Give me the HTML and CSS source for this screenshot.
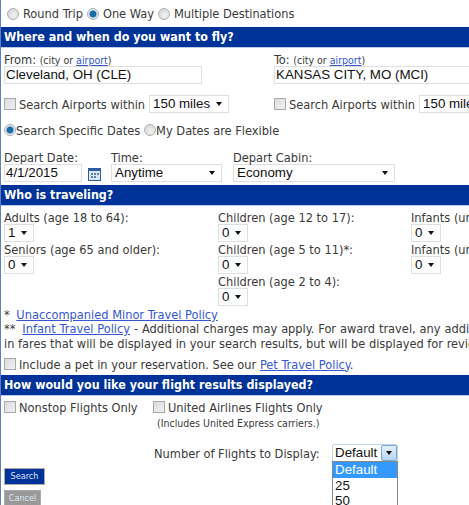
FILE: index.html
```html
<!DOCTYPE html>
<html lang="en">
    <head>
        <meta charset="UTF-8">
        <title>Flight Search</title>
        <link rel="stylesheet" href="styles.css">
    </head>
    <body>
        <form class="page">
            <div class="trip-type">
                <label><span class="radio"></span>Round Trip</label>
                <label><span class="radio checked"></span>One Way</label>
                <label><span class="radio"></span>Multiple Destinations</label>
            </div>

            <h2 class="section-bar">Where and when do you want to fly?</h2>
            <div class="route">
                <div class="route-col">
                    <div class="field-label">From: <small>(city or <a href="#">airport</a>)</small></div>
                    <div class="input wide">Cleveland, OH (CLE)</div>
                    <div class="within">
                        <span class="check"></span>
                        <span>Search Airports within</span>
                        <div class="select miles">150 miles<i class="arrow"></i></div>
                    </div>
                </div>
                <div class="route-col">
                    <div class="field-label">To: <small>(city or <a href="#">airport</a>)</small></div>
                    <div class="input wide">KANSAS CITY, MO (MCI)</div>
                    <div class="within">
                        <span class="check"></span>
                        <span>Search Airports within</span>
                        <div class="select miles">150 miles<i class="arrow"></i></div>
                    </div>
                </div>
            </div>
            <div class="date-type">
                <span class="radio checked"></span><span>Search Specific Dates</span>
                <span class="radio second"></span><span>My Dates are Flexible</span>
            </div>
            <div class="depart">
                <div class="depart-date">
                    <div class="field-label">Depart Date:</div>
                    <div class="date-row">
                        <div class="input date">4/1/2015</div>
                        <svg class="cal" width="13" height="13" viewBox="0 0 13 13">
                            <rect x="0.5" y="0.5" width="12" height="12" fill="#dbe6f4" stroke="#2f5d9e"/>
                            <rect x="1" y="1" width="11" height="2" fill="#2f5d9e"/>
                            <path d="M3 5h2v2H3zM6 5h2v2H6zM9 5h2v2H9zM3 8h2v2H3zM6 8h2v2H6z" fill="#5a83bb"/>
                        </svg>
                    </div>
                </div>
                <div class="depart-time">
                    <div class="field-label">Time:</div>
                    <div class="select time">Anytime<i class="arrow"></i></div>
                </div>
                <div class="depart-cabin">
                    <div class="field-label">Depart Cabin:</div>
                    <div class="select cabin">Economy<i class="arrow"></i></div>
                </div>
            </div>

            <h2 class="section-bar">Who is traveling?</h2>
            <div class="travelers">
                <div class="pax-col col-1">
                    <div class="field-label">Adults (age 18 to 64):</div>
                    <div class="select num">1<i class="arrow"></i></div>
                    <div class="field-label">Seniors (age 65 and older):</div>
                    <div class="select num">0<i class="arrow"></i></div>
                </div>
                <div class="pax-col col-2">
                    <div class="field-label">Children (age 12 to 17):</div>
                    <div class="select num">0<i class="arrow"></i></div>
                    <div class="field-label">Children (age 5 to 11)*:</div>
                    <div class="select num">0<i class="arrow"></i></div>
                    <div class="field-label">Children (age 2 to 4):</div>
                    <div class="select num">0<i class="arrow"></i></div>
                </div>
                <div class="pax-col col-3">
                    <div class="field-label">Infants (under 2, in seat):</div>
                    <div class="select num">0<i class="arrow"></i></div>
                    <div class="field-label">Infants (under 2, on lap):</div>
                    <div class="select num">0<i class="arrow"></i></div>
                </div>
            </div>
            <div class="policies">
                <p><span class="stars">*</span> <a href="#">Unaccompanied Minor Travel Policy</a></p>
                <p class="award"><span class="stars">**</span> <a href="#">Infant Travel Policy</a> - Additional charges may apply. For award travel, any additional fees</p>
                <p>in fares that will be displayed in your search results, but will be displayed for review before purchase.</p>
            </div>
            <div class="pet">
                <span class="check"></span>
                <span>Include a pet in your reservation. See our <a href="#">Pet Travel Policy</a>.</span>
            </div>

            <h2 class="section-bar">How would you like your flight results displayed?</h2>
            <div class="results">
                <div class="result-opts">
                    <div class="opt nonstop"><span class="check"></span><span>Nonstop Flights Only</span></div>
                    <div>
                        <div class="opt"><span class="check"></span><span>United Airlines Flights Only</span></div>
                        <div class="note">(Includes United Express carriers.)</div>
                    </div>
                </div>
                <div class="count-row">
                    <span class="count-label">Number of Flights to Display:</span>
                    <div class="count">
                        <div class="count-box">Default<span class="count-btn"><i class="arrow"></i></span></div>
                        <ul class="count-menu">
                            <li class="active">Default</li>
                            <li>25</li>
                            <li>50</li>
                        </ul>
                    </div>
                </div>
                <div class="btn blue">Search</div>
                <div class="btn grey">Cancel</div>
            </div>
        </form>
    </body>
</html>
```

FILE: styles.css
```css
html, body {
    margin: 0;
    height: 505px;
    overflow: hidden;
    background-color: white;
}
body {
    font-family: "DejaVu Sans Condensed", "DejaVu Sans", sans-serif;
    font-size: 12.7px;
    color: #3a3a3a;
}
a {
    color: #3557d6;
}
.page {
    width: 469px;
    height: 505px;
    overflow: hidden;
    box-sizing: border-box;
    border-left: 1px solid #5f7fc4;
    white-space: nowrap;
}
.trip-type {
    display: flex;
    gap: 4px;
    height: 27px;
    align-items: center;
    padding-left: 6px;
}
.trip-type label {
    display: flex;
    align-items: center;
    gap: 4px;
}
.section-bar {
    margin: 0 0 0 -1px;
    box-sizing: border-box;
    height: 21px;
    line-height: 20px;
    padding-left: 4px;
    background-color: #003399;
    color: white;
    font-size: 12.4px;
    font-weight: bold;
    border-bottom: 1px solid #bccbe6;
}
.radio {
    display: inline-block;
    box-sizing: border-box;
    width: 12px;
    height: 12px;
    flex: none;
    border-radius: 50%;
    background: radial-gradient(circle at 60% 65%, #f2f2f2, #d0d0d0);
    border: 1px solid #b0b0b0;
}
.radio.checked {
    background: radial-gradient(circle, #1a6ea8 0 3px, #dfe9f2 4px);
}
.radio.second {
    margin-left: 4px;
}
.check {
    display: inline-block;
    box-sizing: border-box;
    width: 12px;
    height: 12px;
    flex: none;
    background: linear-gradient(135deg, #dcdcdc, #f0f0f0);
    border: 1px solid #a9a9a9;
}
.field-label {
    height: 13px;
    line-height: 13px;
}
.field-label small {
    font-size: 10.5px;
}
.input, .select, .count-box {
    font-family: "Liberation Sans", Arial, sans-serif;
    font-size: 13.33px;
    color: #111;
    box-sizing: border-box;
    background-color: white;
    border: 1px solid #dfdfdf;
    height: 18px;
    line-height: 16px;
}
.input {
    padding-left: 1px;
}
.select {
    display: flex;
    flex: none;
    justify-content: space-between;
    align-items: center;
    padding: 0 6px 0 3px;
}
.arrow {
    display: inline-block;
    width: 0;
    height: 0;
    border-left: 3.5px solid transparent;
    border-right: 3.5px solid transparent;
    border-top: 4px solid #111;
}
.route {
    display: flex;
    padding-top: 5px;
}
.route-col {
    flex: none;
    padding-left: 3px;
}
.route-col:first-child {
    width: 267px;
}
.route-col .wide {
    width: 198px;
}
.route-col:last-child .wide {
    width: 230px;
}
.within {
    display: flex;
    align-items: center;
    gap: 3px;
    margin-top: 11px;
}
.miles {
    width: 80px;
    margin-left: 1px;
}
.date-type {
    display: flex;
    align-items: center;
    height: 14px;
    padding: 10px 0 0 3px;
}
.depart {
    display: flex;
    padding: 14px 0 3px 3px;
}
.depart-date {
    flex: none;
    width: 107px;
}
.depart-time {
    flex: none;
    width: 122px;
}
.date-row {
    display: flex;
    align-items: flex-end;
    gap: 6px;
}
.date {
    width: 78px;
}
.cal {
    display: block;
    margin-bottom: 1px;
}
.time {
    width: 111px;
}
.cabin {
    width: 162px;
}
.travelers {
    display: flex;
    padding: 5px 0 0 3px;
}
.pax-col {
    flex: none;
}
.col-1 {
    width: 214px;
}
.col-2 {
    width: 193px;
}
.num {
    width: 30px;
    margin-bottom: 1px;
}
.policies p {
    margin: 0;
    padding-left: 3px;
    height: 14px;
    line-height: 14px;
}
.policies p:first-child, .policies p:last-child {
    height: 15px;
    line-height: 15px;
}
.policies .award {
    word-spacing: 0.3px;
}
.stars {
    margin-right: 3px;
}
.pet {
    display: flex;
    align-items: center;
    gap: 3px;
    height: 14px;
    padding-left: 3px;
    margin: 6px 0 4px;
}
.results {
    padding: 4px 0 0 3px;
}
.result-opts {
    display: flex;
}
.nonstop {
    flex: none;
    width: 149px;
    align-self: flex-start;
}
.opt {
    display: flex;
    align-items: center;
    gap: 3px;
    height: 14px;
}
.note {
    font-size: 10.5px;
    height: 12px;
    line-height: 12px;
    margin: 3px 0 0 4px;
}
.count-row {
    display: flex;
    align-items: center;
    margin: 15px 0 0 150px;
    height: 18px;
}
.count-label {
    flex: none;
    width: 178px;
}
.count {
    position: relative;
}
.count-box {
    display: flex;
    justify-content: space-between;
    width: 66px;
    padding-left: 2px;
    border-color: #bcd3ea;
    border-radius: 2px;
}
.count-btn {
    display: flex;
    align-items: center;
    justify-content: center;
    width: 16px;
    background: linear-gradient(#e3f0fb, #b5d6f0);
    border: 1px solid #7da7cf;
    box-sizing: border-box;
    border-radius: 2px;
}
.count-menu {
    position: absolute;
    top: 17px;
    left: 0;
    width: 66px;
    box-sizing: border-box;
    margin: 0;
    padding: 0;
    list-style: none;
    background-color: white;
    border: 1px solid #888;
    font-family: "Liberation Sans", Arial, sans-serif;
    font-size: 13.33px;
    color: #111;
}
.count-menu li {
    height: 15.5px;
    line-height: 15.5px;
    padding-left: 2px;
}
.count-menu .active {
    background-color: #3399ff;
    color: white;
}
.btn {
    font-size: 9px;
    color: #dfe6f5;
    box-sizing: border-box;
    height: 17px;
    line-height: 15px;
    text-align: center;
    border: 1px solid #aaa;
}
.blue {
    width: 41px;
    background-color: #003399;
    margin-top: 6px;
}
.grey {
    width: 37px;
    background-color: #999;
    margin-top: 5px;
}
```
